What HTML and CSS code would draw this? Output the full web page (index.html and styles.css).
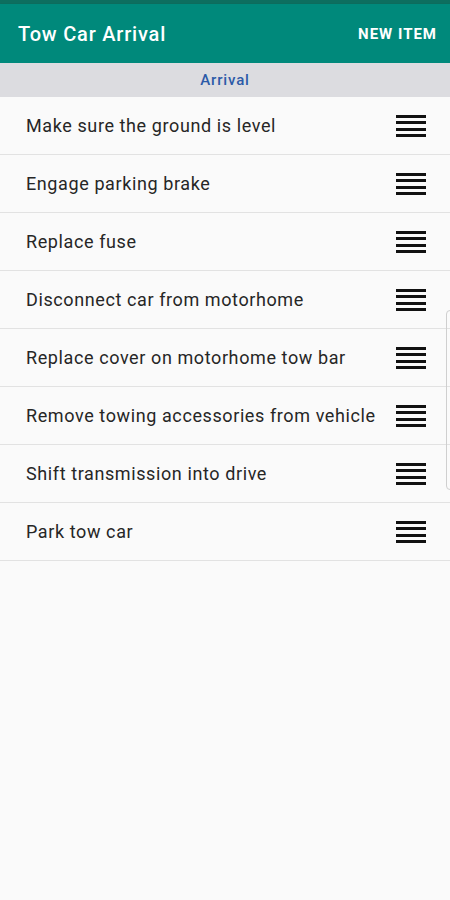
FILE: index.html
```html
<!DOCTYPE html>
<html lang="en">
<head>
    <meta charset="UTF-8">
    <meta name="viewport" content="width=device-width, initial-scale=1.0">
    <title>Tow Car Arrival</title>
    <link rel="stylesheet" href="styles.css">
</head>
<body>
    <div class="status-bar"></div>
    <header class="app-bar">
        <h1>Tow Car Arrival</h1>
        <a href="#" class="action">NEW ITEM</a>
    </header>
    <div class="section-title">Arrival</div>
    <ul class="list">
        <li><span>Make sure the ground is level</span><i class="handle"></i></li>
        <li><span>Engage parking brake</span><i class="handle"></i></li>
        <li><span>Replace fuse</span><i class="handle"></i></li>
        <li><span>Disconnect car from motorhome</span><i class="handle"></i></li>
        <li><span>Replace cover on motorhome tow bar</span><i class="handle"></i></li>
        <li><span>Remove towing accessories from vehicle</span><i class="handle"></i></li>
        <li><span>Shift transmission into drive</span><i class="handle"></i></li>
        <li><span>Park tow car</span><i class="handle"></i></li>
    </ul>
    <div class="edge-handle"></div>
</body>
</html>
```

FILE: styles.css
```css
body {
    font-family: Roboto, "Noto Sans", Arial, sans-serif;
    margin: 0;
    padding: 0;
    background: #fafafa;
    height: 900px;
    position: relative;
    overflow: hidden;
}
.status-bar {
    height: 4px;
    background: #0d6e5f;
}
.app-bar {
    height: 59px;
    background: #00897b;
    color: white;
    display: flex;
    align-items: center;
    justify-content: space-between;
    padding: 0 13px 0 18px;
    box-shadow: 0 1px 2px rgba(0, 0, 0, 0.2);
}
.app-bar h1 {
    margin: 0;
    font-size: 20px;
    font-weight: 500;
    letter-spacing: 0.8px;
}
.action {
    color: white;
    text-decoration: none;
    font-size: 15px;
    font-weight: 700;
    letter-spacing: 1px;
}
.section-title {
    height: 34px;
    line-height: 34px;
    background: #dcdce0;
    color: #2c5aa8;
    text-align: center;
    font-size: 15px;
    font-weight: 500;
    letter-spacing: 0.85px;
}
.list {
    list-style: none;
    margin: 0;
    padding: 0;
}
.list li {
    height: 57px;
    border-bottom: 1px solid #e2e2e2;
    display: flex;
    align-items: center;
    justify-content: space-between;
    padding: 0 24px 0 26px;
    color: #262626;
    font-size: 18px;
    letter-spacing: 0.6px;
}
.handle {
    width: 30px;
    height: 22px;
    background: repeating-linear-gradient(to bottom, #111 0, #111 3px, transparent 3px, transparent 6.33px);
}
.edge-handle {
    position: absolute;
    right: -4px;
    top: 310px;
    width: 6px;
    height: 178px;
    border: 1px solid #cfcfcf;
    border-radius: 4px;
}
```
